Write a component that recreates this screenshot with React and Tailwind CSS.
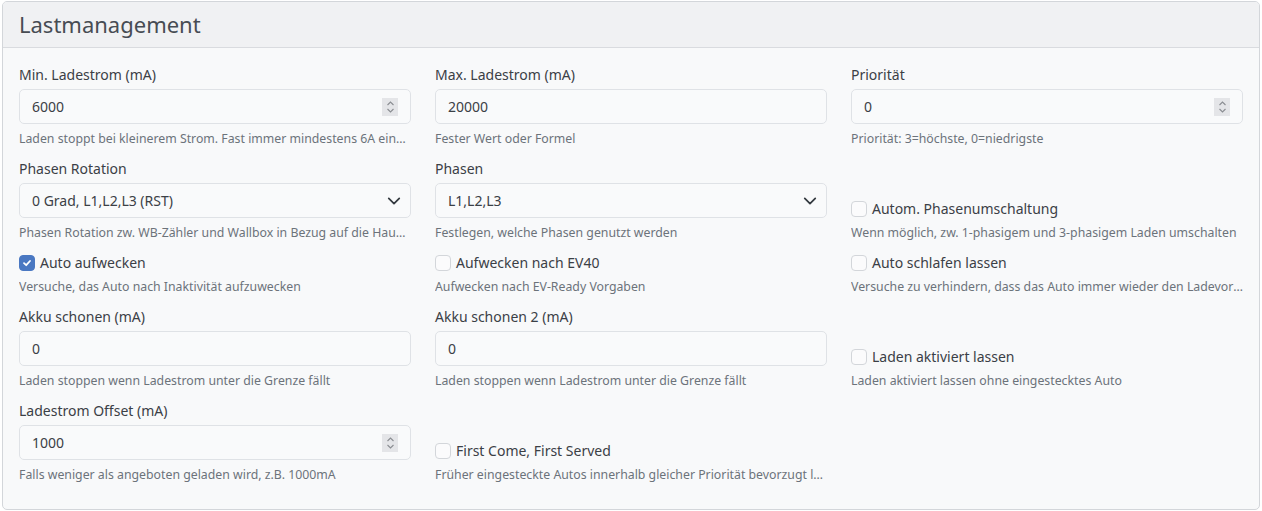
import React from 'react';

const FONT = { fontFamily: '"Noto Sans", "Open Sans", sans-serif' };

function Spinner() {
    return (
        <span className="absolute right-[13px] top-1/2 -translate-y-1/2 w-[16px] h-[18px] bg-[#e4e5e8] flex items-center justify-center">
            <svg width="9" height="14" viewBox="0 0 9 14" fill="none" stroke="#8a8d92" strokeWidth="1.1">
                <path d="M1.5 5 L4.5 2 L7.5 5" />
                <path d="M1.5 9 L4.5 12 L7.5 9" />
            </svg>
        </span>
    );
}

function Chevron() {
    return (
        <svg className="absolute right-[10px] top-1/2 -translate-y-1/2" width="14" height="14" viewBox="0 0 16 16" fill="none" stroke="#343a40" strokeWidth="2" strokeLinecap="round" strokeLinejoin="round">
            <path d="M2 5l6 6 6-6" />
        </svg>
    );
}

function Help({ children, check }) {
    return (
        <div className={`${check ? 'mt-[5px]' : 'mt-1.5'} text-[12.3px] leading-[18px] text-[#6c737a] truncate`}>
            {children}
        </div>
    );
}

function Field({ label, value, help, number, select }) {
    return (
        <div className="flex flex-col min-w-0">
            <label className="text-[14px] leading-[21px] text-[#3b4046] mb-1">{label}</label>
            <div className="relative">
                {select ? (
                    <select
                        defaultValue={value}
                        className="appearance-none w-full h-[35px] px-3 rounded-[5px] border border-[#dfe2e6] bg-[#f9fafb] text-[14px] text-[#3b4046] outline-none"
                        style={FONT}
                    >
                        <option>{value}</option>
                    </select>
                ) : (
                    <input
                        type="text"
                        defaultValue={value}
                        className="w-full h-[35px] px-3 rounded-[5px] border border-[#dfe2e6] bg-[#f9fafb] text-[14px] text-[#3b4046] outline-none"
                        style={FONT}
                    />
                )}
                {number && <Spinner />}
                {select && <Chevron />}
            </div>
            <Help>{help}</Help>
        </div>
    );
}

function Check({ label, help, checked }) {
    return (
        <div className="flex flex-col justify-end min-w-0">
            <label className="flex items-center gap-[5px] text-[14px] leading-[21px] text-[#3b4046]">
                {checked ? (
                    <span className="w-4 h-4 rounded-[4px] bg-[#4a78c2] border border-[#4a78c2] flex items-center justify-center">
                        <svg width="10" height="10" viewBox="0 0 10 10" fill="none" stroke="white" strokeWidth="1.8" strokeLinecap="round" strokeLinejoin="round">
                            <path d="M2 5.2 L4.2 7.2 L8 3" />
                        </svg>
                    </span>
                ) : (
                    <span className="w-4 h-4 rounded-[4px] bg-[#fbfbfc] border border-[#d3d6da]" />
                )}
                {label}
            </label>
            <Help check>{help}</Help>
        </div>
    );
}

export default function App() {
    return (
        <div className="w-[1262px] h-[511px] bg-white pt-px px-[2px]" style={FONT}>
            <div className="rounded-[5px] border border-[#d3d6da] overflow-hidden bg-[#f8f9fa]">
                <div className="h-[46px] bg-[#f0f1f3] border-b border-[#d9dbdf] flex items-center px-4">
                    <h2 className="text-[22px] text-[#474c53]">Lastmanagement</h2>
                </div>
                <div className="grid grid-cols-3 gap-x-6 gap-y-[10px] px-4 pt-4 pb-[25px]">
                    <Field label="Min. Ladestrom (mA)" value="6000" number help="Laden stoppt bei kleinerem Strom. Fast immer mindestens 6A einstellen" />
                    <Field label="Max. Ladestrom (mA)" value="20000" help="Fester Wert oder Formel" />
                    <Field label="Priorität" value="0" number help="Priorität: 3=höchste, 0=niedrigste" />

                    <Field label="Phasen Rotation" value="0 Grad, L1,L2,L3 (RST)" select help="Phasen Rotation zw. WB-Zähler und Wallbox in Bezug auf die Hausinstallation" />
                    <Field label="Phasen" value="L1,L2,L3" select help="Festlegen, welche Phasen genutzt werden" />
                    <Check label="Autom. Phasenumschaltung" help="Wenn möglich, zw. 1-phasigem und 3-phasigem Laden umschalten" />

                    <Check label="Auto aufwecken" checked help="Versuche, das Auto nach Inaktivität aufzuwecken" />
                    <Check label="Aufwecken nach EV40" help="Aufwecken nach EV-Ready Vorgaben" />
                    <Check label="Auto schlafen lassen" help="Versuche zu verhindern, dass das Auto immer wieder den Ladevorgang startet" />

                    <Field label="Akku schonen (mA)" value="0" help="Laden stoppen wenn Ladestrom unter die Grenze fällt" />
                    <Field label="Akku schonen 2 (mA)" value="0" help="Laden stoppen wenn Ladestrom unter die Grenze fällt" />
                    <Check label="Laden aktiviert lassen" help="Laden aktiviert lassen ohne eingestecktes Auto" />

                    <Field label="Ladestrom Offset (mA)" value="1000" number help="Falls weniger als angeboten geladen wird, z.B. 1000mA" />
                    <Check label="First Come, First Served" help="Früher eingesteckte Autos innerhalb gleicher Priorität bevorzugt laden" />
                    <div />
                </div>
            </div>
        </div>
    );
}
